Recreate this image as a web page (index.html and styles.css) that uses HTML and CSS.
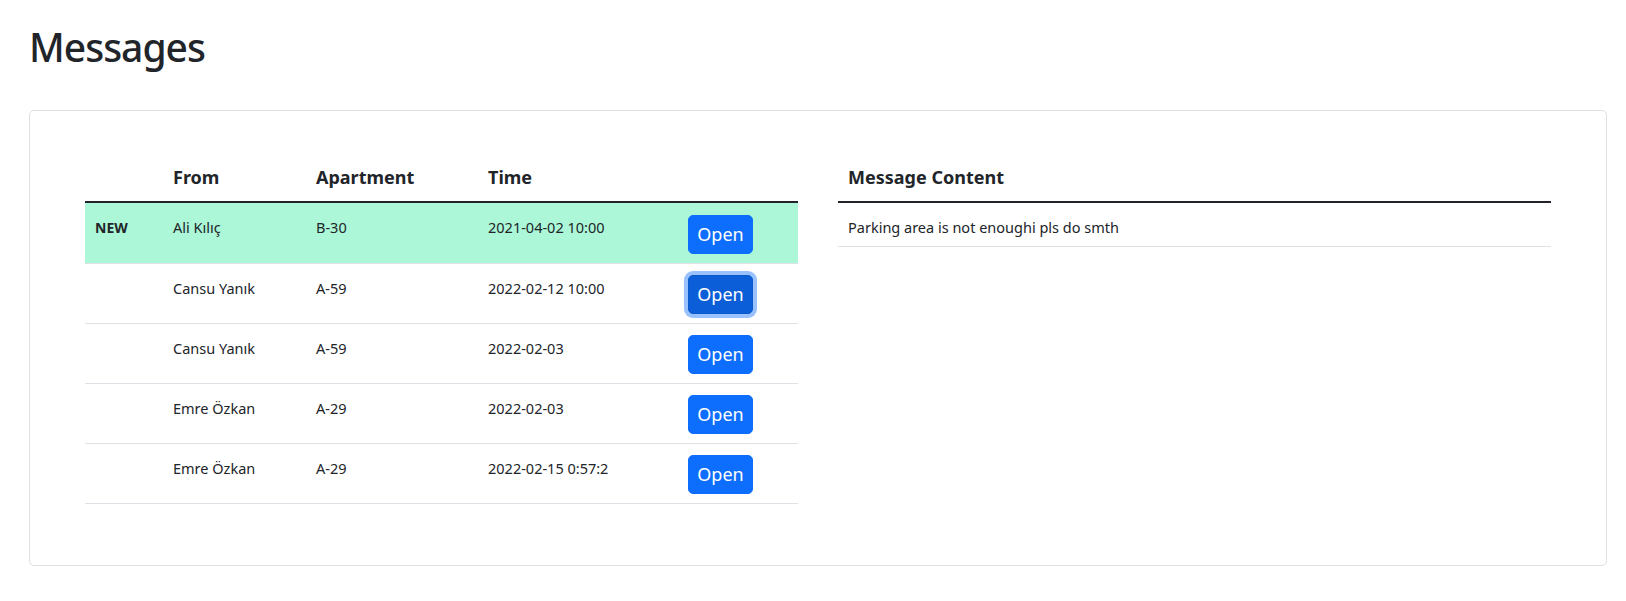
FILE: index.html
```html
<!DOCTYPE html>
<html lang="en">
<head>
    <meta charset="UTF-8">
    <title>Messages</title>
    <link rel="stylesheet" href="styles.css">
</head>

<body>
<div class="page">
    <h1 class="page-tit">Messages</h1>
    <div class="card">
        <div class="card-body">
            <table class="msg-table list-table">
                <thead>
                    <tr>
                        <th class="c-new"></th>
                        <th class="c-from">From</th>
                        <th class="c-apt">Apartment</th>
                        <th class="c-time">Time</th>
                        <th class="c-btn"></th>
                    </tr>
                </thead>
                <tbody>
                    <tr class="unread">
                        <td class="tag">NEW</td>
                        <td>Ali Kılıç</td>
                        <td>B-30</td>
                        <td>2021-04-02 10:00</td>
                        <td class="act"><button class="btn">Open</button></td>
                    </tr>
                    <tr>
                        <td></td>
                        <td>Cansu Yanık</td>
                        <td>A-59</td>
                        <td>2022-02-12 10:00</td>
                        <td class="act"><button class="btn focus">Open</button></td>
                    </tr>
                    <tr>
                        <td></td>
                        <td>Cansu Yanık</td>
                        <td>A-59</td>
                        <td>2022-02-03</td>
                        <td class="act"><button class="btn">Open</button></td>
                    </tr>
                    <tr>
                        <td></td>
                        <td>Emre Özkan</td>
                        <td>A-29</td>
                        <td>2022-02-03</td>
                        <td class="act"><button class="btn">Open</button></td>
                    </tr>
                    <tr>
                        <td></td>
                        <td>Emre Özkan</td>
                        <td>A-29</td>
                        <td>2022-02-15 0:57:2</td>
                        <td class="act"><button class="btn">Open</button></td>
                    </tr>
                </tbody>
            </table>

            <table class="msg-table content-table">
                <thead>
                    <tr><th>Message Content</th></tr>
                </thead>
                <tbody>
                    <tr><td>Parking area is not enoughi pls do smth</td></tr>
                </tbody>
            </table>
        </div>
    </div>
</div>
</body>
</html>
```

FILE: styles.css
```css
body{margin: 0; font-family: "Noto Sans", "Open Sans", sans-serif; color: #212529; background: #fff}
h1{margin: 0; font-weight: 500}

.page{padding: 0 19px 0 29px}
.page-tit{margin: 24px 0 39px; font-size: 39px; line-height: 1.2; letter-spacing: -1px}

.card{border: 1px solid #dfdfdf; border-radius: 5px; background: #fff}
.card-body{display: grid; grid-template-columns: 1fr 1fr; column-gap: 40px; align-items: start; padding: 53px 55px 61px}

.msg-table{width: 100%; border-collapse: collapse; font-size: 14.5px; line-height: 1.6}
.msg-table th{padding: 0 10px 10px; text-align: left; font-size: 18px; font-weight: 700; line-height: 1.5}
.msg-table thead tr{border-bottom: 2px solid #212529}
.msg-table td{padding: 12px 10px 9px; vertical-align: top; border-bottom: 1px solid #dee2e6}

.list-table td{line-height: 1.75}
.list-table td.act{padding-top: 11px}
.list-table tr.unread td.act{padding-top: 12px}
.list-table .c-new{width: 58px}
.list-table .c-from{width: 123px}
.list-table .c-apt{width: 152px}
.list-table .c-time{width: 180px}
.list-table tr.unread td{background: #abf7d7}
.list-table td.tag{font-weight: 700; font-size: 14px; line-height: 25px}

.content-table td{padding: 13px 10px 7px}

.btn{display: block; width: 65px; height: 39px; padding: 0; border: 1px solid #0d6efd; border-radius: 5px; background: #0d6efd; color: #fff; font-family: inherit; font-size: 18px; line-height: 1; cursor: pointer}
.btn.focus{background: #0b5ed7; border-color: #0a58ca; box-shadow: 0 0 0 4px #98c1fe}
```
